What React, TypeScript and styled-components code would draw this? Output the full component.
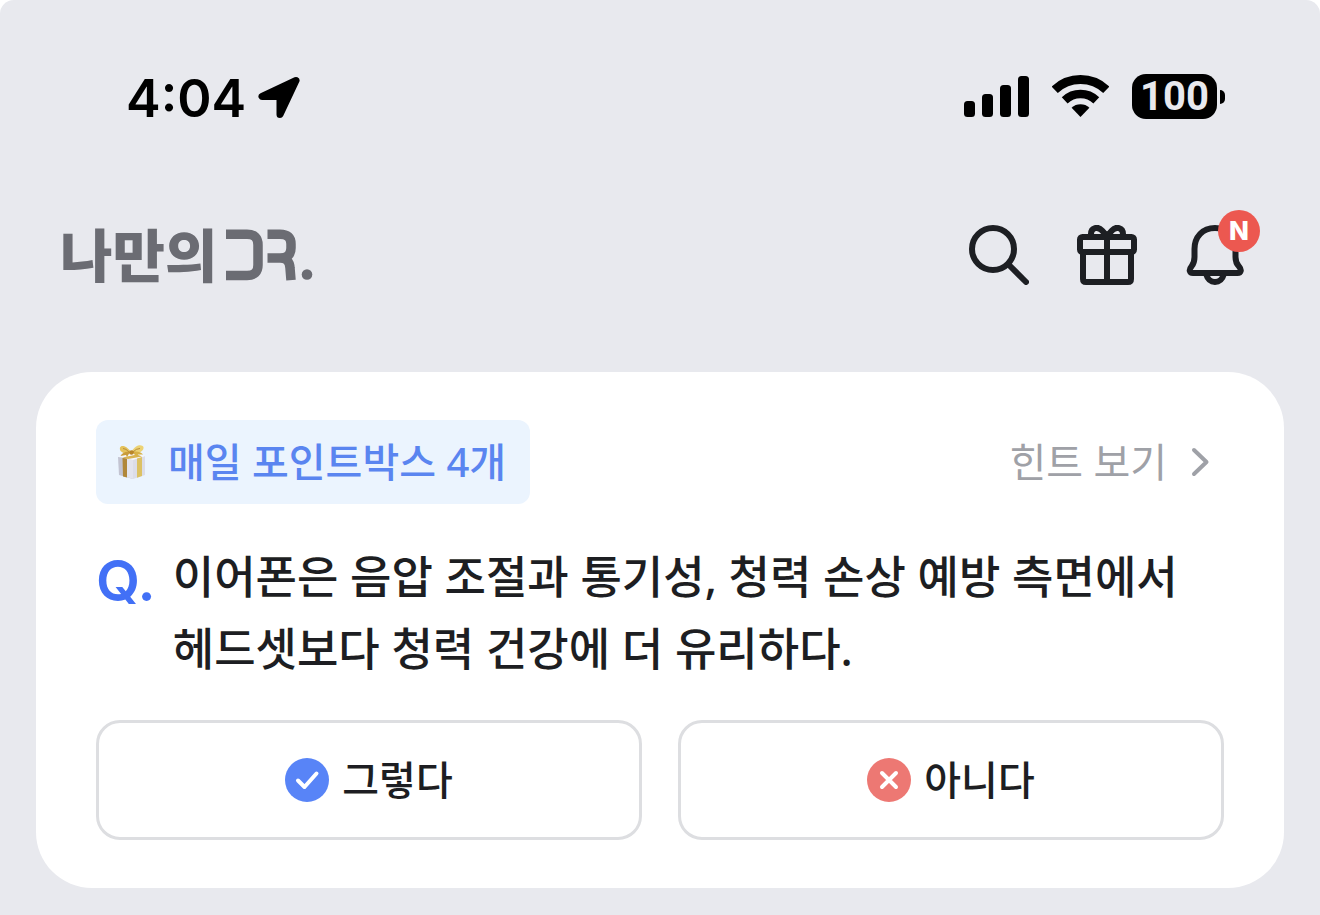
import React from "react";
import styled, { createGlobalStyle } from "styled-components";

const GlobalStyle = createGlobalStyle`
  *, *::before, *::after { box-sizing: border-box; }
  html, body { min-height: 100%; }
  body {
    margin: 0;
    background: #ffffff;
    color: #1d1e22;
    font-family: "Noto Sans", "Noto Sans CJK KR", sans-serif;
  }
  button, a { font: inherit; color: inherit; }
`;

const Screen = styled.div`
  min-height: 100vh;
  background: #e8e9ee;
  border-radius: 14px 14px 0 0;
`;

const StatusBar = styled.div`
  display: flex;
  align-items: center;
  justify-content: space-between;
  padding: 57px 95px 0 126px;
  color: #000000;
`;

const StatusGroup = styled.div<{ $gap: number }>`
  display: flex;
  align-items: center;
  gap: ${(p) => p.$gap}px;
`;

const Clock = styled.time`
  padding-top: 4px;
  font-family: Inter, sans-serif;
  font-size: 52px;
  font-weight: 600;
  line-height: 75px;
`;

const Battery = styled.div`
  display: flex;
  align-items: center;
  gap: 3px;
`;

const BatteryBody = styled.span`
  width: 85px;
  border-radius: 14px;
  background: #000000;
  color: #e8e9ee;
  font-family: Roboto, sans-serif;
  font-size: 40px;
  font-weight: 700;
  line-height: 46px;
  height: 45px;
  text-align: center;
`;

const BatteryTip = styled.span`
  width: 5px;
  height: 14px;
  border-radius: 0 5px 5px 0;
  background: #000000;
`;

const Header = styled.header`
  display: flex;
  align-items: center;
  justify-content: space-between;
  padding: 89px 75px 87px 60px;
`;

const Logo = styled.a`
  display: flex;
  align-items: center;
  gap: 8px;
  height: 60px;
  color: #6b6c73;
  font-size: 57px;
  font-weight: 900;
  line-height: 60px;
  text-decoration: none;
`;

const Actions = styled.nav`
  display: flex;
  gap: 48px;
`;

const IconButton = styled.button`
  position: relative;
  display: flex;
  padding: 0;
  border: 0;
  background: none;
  color: #1d1f23;
  cursor: pointer;
`;

const NewBadge = styled.span`
  position: absolute;
  top: -15px;
  right: -15px;
  width: 42px;
  border-radius: 50%;
  background: #ec5850;
  color: #ffffff;
  font-family: Inter, sans-serif;
  font-size: 26px;
  font-weight: 800;
  line-height: 42px;
  text-align: center;
`;

const QuizCard = styled.main`
  margin: 0 36px;
  padding: 48px 60px;
  border-radius: 56px;
  background: #ffffff;
`;

const CardTop = styled.div`
  display: flex;
  align-items: center;
  justify-content: space-between;
`;

const PointTag = styled.div`
  display: flex;
  align-items: center;
  gap: 21px;
  padding: 0 24px 0 20px;
  border-radius: 12px;
  background: #ebf4fe;
  color: #5a85f0;
  font-size: 40px;
  font-weight: 500;
  line-height: 84px;
`;

const HintLink = styled.a`
  display: flex;
  align-items: center;
  gap: 23px;
  padding-right: 14px;
  color: #9fa1a7;
  font-size: 40px;
  line-height: 84px;
  text-decoration: none;
`;

const Question = styled.div`
  display: flex;
  gap: 17px;
  padding: 37px 0 35px;
`;

const QuestionMark = styled.span`
  color: #4270f6;
  font-family: Inter, sans-serif;
  font-size: 57px;
  font-weight: 600;
  line-height: 80px;
`;

const QuestionText = styled.h1`
  margin: 0;
  font-size: 45px;
  font-weight: 500;
  line-height: 72px;
  word-break: keep-all;
`;

const Answers = styled.div`
  display: grid;
  grid-template-columns: 1fr 1fr;
  gap: 36px;
`;

const AnswerButton = styled.button`
  display: flex;
  align-items: center;
  justify-content: center;
  gap: 13px;
  padding: 0;
  border: 3px solid #dddee1;
  border-radius: 24px;
  background: #ffffff;
  color: #1d1e22;
  font-size: 40px;
  font-weight: 500;
  line-height: 114px;
  cursor: pointer;
`;

const LocationArrow = () => (
  <svg width="42" height="42" viewBox="0 0 42 42" aria-hidden="true">
    <path d="M38 4.500 4 20.500H22V38.500Z" fill="currentColor" stroke="currentColor" strokeWidth="7" strokeLinejoin="round" />
  </svg>
);

const Signal = () => (
  <svg width="65" height="41" viewBox="0 0 65 41" fill="currentColor" aria-hidden="true">
    <rect x="0" y="25" width="11" height="16" rx="3.5" />
    <rect x="18" y="18" width="11" height="23" rx="3.5" />
    <rect x="36" y="9" width="11" height="32" rx="3.5" />
    <rect x="54" y="0" width="11" height="41" rx="3.5" />
  </svg>
);

const Wifi = () => (
  <svg width="57" height="43" viewBox="0 0 57 43" fill="none" stroke="currentColor" aria-hidden="true">
    <path d="M2.7 14.8A37.5 37.5 0 0 1 54.3 14.8" strokeWidth="9" />
    <path d="M12.7 25.3A23 23 0 0 1 44.3 25.3" strokeWidth="8.5" />
    <path d="M19.6 32.8A13.2 13.2 0 0 1 37.4 32.8L28.5 42Z" fill="currentColor" stroke="none" />
  </svg>
);

const LogoMark = () => (
  <svg width="90" height="56" viewBox="0 0 90 56" fill="none" stroke="currentColor" strokeWidth="9.500" aria-hidden="true">
    <path d="M1 7.200H22Q33 7.200 33 18V38Q33 48.500 22 48.500H1" />
    <path d="M42.500 7.200H55Q66 7.200 66 17V21Q66 31 55 31H42.500M55 31Q64.500 31 65 41L66 53.200" />
    <circle cx="82" cy="47.500" r="5.300" fill="currentColor" stroke="none" />
  </svg>
);

const SearchIcon = () => (
  <svg width="60" height="60" viewBox="0 0 60 60" fill="none" stroke="currentColor" strokeWidth="6" strokeLinecap="round" aria-hidden="true">
    <circle cx="24" cy="24" r="21" />
    <path d="M39.500 39.500 57 57" />
  </svg>
);

const GiftIcon = () => (
  <svg width="60" height="60" viewBox="0 0 60 60" fill="none" stroke="currentColor" strokeWidth="6" strokeLinejoin="round" aria-hidden="true">
    <rect x="3" y="12" width="54" height="15" rx="2.500" />
    <path d="M6 27V54Q6 57 9 57H51Q54 57 54 54V27M30 12V57" />
    <path d="M14 12V9C14 2.500 21 1 25 5.500L30 11 35 5.500C39 1 46 2.500 46 9V12" />
  </svg>
);

const BellIcon = () => (
  <svg width="60" height="60" viewBox="0 0 60 60" fill="none" stroke="currentColor" strokeWidth="6" strokeLinejoin="round" aria-hidden="true">
    <path d="M30 3C17.500 3 9.500 12 9.500 24V32C9.500 37 8.500 39 6.500 41.500 3.500 45 4.500 48 8 48H52.500C56 48 57 45 54 41.500 51.500 39 50.500 37 50.500 32V24C50.500 12 42.500 3 30 3Z" />
    <path d="M21 49C22.500 54 26 57 30 57S37.500 54 39 49" />
  </svg>
);

const GiftBox = () => (
  <svg width="31" height="36" viewBox="0 0 31 36" aria-hidden="true">
    <path d="M2 13 17 15V35L3 31Z" fill="#c3c4d2" />
    <path d="M10 14 17 15V35L10.500 33Z" fill="#e3e4ee" />
    <path d="M17 15 29 12V31L17 35Z" fill="#dcdde8" />
    <path d="M2 12 15 9 29 12 17 16Z" fill="#f7f7fb" />
    <path d="M6.500 14 11 14.500V33.500L7 32.400Z" fill="#b0873a" />
    <path d="M21 14.500 26 13V32L21 33.700Z" fill="#dcc164" />
    <path d="M6.500 13.500 21 10.500 26 12.500 12 15Z" fill="#d9b451" />
    <path d="M15 8C10 1 5 1 4 3.500 3 7 7 11 15 9Z" fill="#e4c25c" />
    <path d="M15 8C20 0 26 0 27.500 3 28 7 23 10 15 9Z" fill="#ecd274" />
    <path d="M14 8C10 7 6 9 4.500 12L10 11 11 13Z" fill="#c99c3b" />
    <path d="M16 8C21 7 25 8 27 10.500L22 10.500 21 13Z" fill="#d8b146" />
    <path d="M7 4.500Q10 4.500 13 8M24 4.500Q20 4.500 17 8" fill="none" stroke="#b98d3a" strokeWidth="1" />
    <circle cx="15.500" cy="8.500" r="2.300" fill="#b98527" />
  </svg>
);

const Chevron = () => (
  <svg width="20" height="30" viewBox="0 0 20 30" fill="none" stroke="currentColor" strokeWidth="4" strokeLinecap="round" strokeLinejoin="round" aria-hidden="true">
    <path d="M4 3 16.500 15 4 27" />
  </svg>
);

const MarkIcon = ({ color, d }: { color: string; d: string }) => (
  <svg width="44" height="44" viewBox="0 0 44 44" aria-hidden="true">
    <circle cx="22" cy="22" r="22" fill={color} />
    <path d={d} fill="none" stroke="#ffffff" strokeWidth="4" strokeLinecap="round" strokeLinejoin="round" />
  </svg>
);

const answers = [
  { label: "그렇다", color: "#5884f7", d: "M13 22.500 19.500 29 31.500 15.500" },
  { label: "아니다", color: "#ed7873", d: "M15 15 29 29M29 15 15 29" },
];

export default function App() {
  return (
    <>
      <GlobalStyle />
      <Screen>
        <StatusBar>
          <StatusGroup $gap={12}>
            <Clock>4:04</Clock>
            <LocationArrow />
          </StatusGroup>
          <StatusGroup $gap={23}>
            <Signal />
            <Wifi />
            <Battery>
              <BatteryBody>100</BatteryBody>
              <BatteryTip />
            </Battery>
          </StatusGroup>
        </StatusBar>
        <Header>
          <Logo href="#home" aria-label="나만의 DR.">
            <span>나만의</span>
            <LogoMark />
          </Logo>
          <Actions>
            <IconButton type="button" aria-label="검색">
              <SearchIcon />
            </IconButton>
            <IconButton type="button" aria-label="선물">
              <GiftIcon />
            </IconButton>
            <IconButton type="button" aria-label="알림">
              <BellIcon />
              <NewBadge>N</NewBadge>
            </IconButton>
          </Actions>
        </Header>
        <QuizCard>
          <CardTop>
            <PointTag>
              <GiftBox />
              <span>매일 포인트박스 4개</span>
            </PointTag>
            <HintLink href="#hint">
              <span>힌트 보기</span>
              <Chevron />
            </HintLink>
          </CardTop>
          <Question>
            <QuestionMark>Q.</QuestionMark>
            <QuestionText>
              이어폰은 음압 조절과 통기성, 청력 손상 예방 측면에서 헤드셋보다 청력 건강에 더 유리하다.
            </QuestionText>
          </Question>
          <Answers>
            {answers.map((a) => (
              <AnswerButton type="button" key={a.label}>
                <MarkIcon color={a.color} d={a.d} />
                <span>{a.label}</span>
              </AnswerButton>
            ))}
          </Answers>
        </QuizCard>
      </Screen>
    </>
  );
}
